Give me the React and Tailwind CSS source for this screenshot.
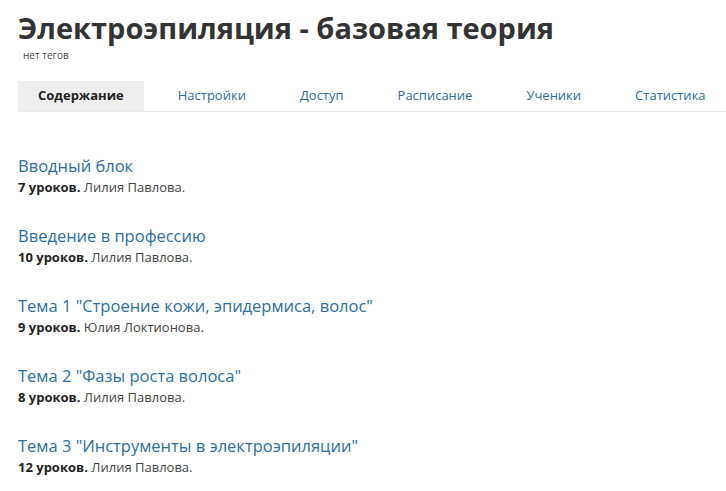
import React from 'react';

const tabs = ['Содержание', 'Настройки', 'Доступ', 'Расписание', 'Ученики', 'Статистика'];

const blocks = [
  { title: 'Вводный блок', count: '7 уроков.', author: 'Лилия Павлова.' },
  { title: 'Введение в профессию', count: '10 уроков.', author: 'Лилия Павлова.' },
  { title: 'Тема 1 "Строение кожи, эпидермиса, волос"', count: '9 уроков.', author: 'Юлия Локтионова.' },
  { title: 'Тема 2 "Фазы роста волоса"', count: '8 уроков.', author: 'Лилия Павлова.' },
  { title: 'Тема 3 "Инструменты в электроэпиляции"', count: '12 уроков.', author: 'Лилия Павлова.' },
];

export default function App() {
  return (
    <div className="min-h-screen bg-white pl-[18px] pt-[8px] text-[#222]" style={{ fontFamily: '"Open Sans", Lato, sans-serif' }}>
      <h1 className="text-[29px] font-bold leading-[40px] text-[#333]">Электроэпиляция - базовая теория</h1>
      <div className="ml-[5px] text-[10px] leading-[14px] text-[#444]">нет тегов</div>

      <div className="mt-[19px] flex gap-[14px] border-b border-[#e8e8e8]">
        {tabs.map((t, i) => (
          <div
            key={t}
            className={`h-[30px] px-[20px] flex items-center text-[13px] whitespace-nowrap ${i === 0 ? 'bg-[#eeeeee] font-bold text-[#222]' : 'text-[#2f6b9a]'}`}
          >
            {t}
          </div>
        ))}
      </div>

      <div className="mt-[42px] flex flex-col gap-[28px]">
        {blocks.map((b) => (
          <div key={b.title}>
            <div className="text-[16.5px] leading-[24px] text-[#2a6fa3]">{b.title}</div>
            <div className="text-[13px] leading-[18px] text-[#444]">
              <span className="font-bold text-[#222]">{b.count}</span> {b.author}
            </div>
          </div>
        ))}
      </div>
    </div>
  );
}
